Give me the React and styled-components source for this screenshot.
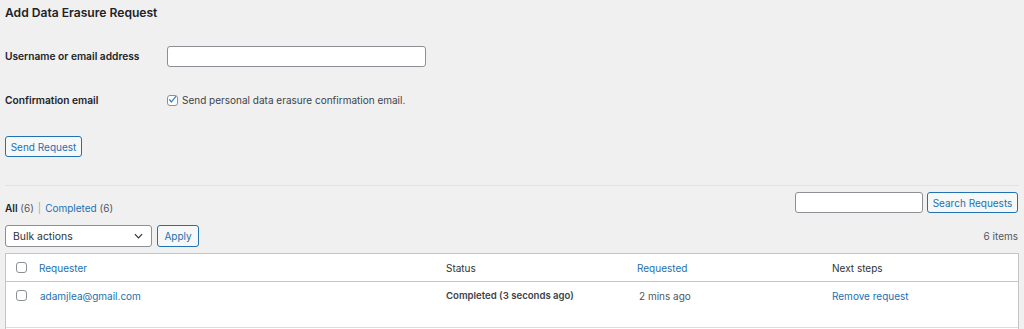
import React from 'react';
import styled, { createGlobalStyle } from 'styled-components';

const GlobalStyle = createGlobalStyle`
    body {
        margin: 0;
        background: #f0f0f1;
        font-family: Inter, "Liberation Sans", sans-serif;
        font-size: 10px;
        color: #3c434a;
    }
`;

const Page = styled.div`
    padding: 0 5px;
    overflow: hidden;
    height: 329px;
`;

const Title = styled.h2`
    margin: 0;
    padding-top: 5px;
    height: 29px;
    font-size: 12.1px;
    line-height: 16px;
    font-weight: 600;
    color: #1d2327;
`;

const FormRow = styled.div`
    display: flex;
    align-items: center;
    height: 44px;
`;

const Label = styled.div`
    width: 162px;
    font-size: 10.2px;
    font-weight: 600;
    color: #1d2327;
`;

const TextInput = styled.input`
    box-sizing: border-box;
    width: ${({w}) => w}px;
    height: 21px;
    margin: 0;
    border: 1px solid #8c8f94;
    border-radius: 3px;
    background: #fff;
`;

const CheckLabel = styled.label`
    display: flex;
    align-items: center;
    gap: 4px;
    color: #3c434a;
`;

const Box = styled.span`
    box-sizing: border-box;
    display: inline-flex;
    align-items: center;
    justify-content: center;
    width: 11px;
    height: 11px;
    border: 1px solid #8c8f94;
    border-radius: 3px;
    background: #fff;
`;

const Button = styled.button`
    box-sizing: border-box;
    width: ${({w}) => w}px;
    height: ${({h}) => h || 21}px;
    padding: 0;
    border: 1px solid #2271b1;
    border-radius: 3px;
    background: #f6f7f7;
    color: #2271b1;
    font-family: inherit;
    font-size: 10px;
    cursor: pointer;
`;

const SubmitWrap = styled.div`
    margin-top: 14px;
`;

const Divider = styled.hr`
    margin: 28px 0 0;
    border: 0;
    border-top: 1px solid #e2e2e4;
`;

const TopBar = styled.div`
    display: flex;
    justify-content: space-between;
    margin-top: 6px;
    height: 21px;
`;

const Filters = styled.div`
    margin-top: 9px;
    line-height: 14px;
    color: #50575e;

    b { color: #1d2327; font-weight: 600; }
    a { color: #2271b1; text-decoration: none; }
    .sep { color: #a7aaad; margin: 0 4px; }
`;

const SearchBox = styled.div`
    display: flex;
    gap: 4px;
    padding-right: 1px;
`;

const NavBar = styled.div`
    display: flex;
    align-items: center;
    justify-content: space-between;
    margin-top: 12px;
    height: 22px;
`;

const NavLeft = styled.div`
    display: flex;
    gap: 5px;
`;

const Select = styled.div`
    box-sizing: border-box;
    display: flex;
    align-items: center;
    justify-content: space-between;
    width: 147px;
    height: 22px;
    padding: 0 8px 0 7px;
    border: 1px solid #8c8f94;
    border-radius: 3px;
    background: #fff;
    color: #2c3338;
    font-size: 10.4px;
`;

const Count = styled.div`
    color: #50575e;
    padding-right: 1px;
`;

const Table = styled.div`
    margin-top: 6px;
    border: 1px solid #c3c4c7;
    background: #fff;
`;

const Row = styled.div`
    display: grid;
    grid-template-columns: 28px 407px 191px 195px 1fr;
    height: ${({h}) => h}px;
    align-items: ${({head}) => (head ? 'center' : 'start')};
    border-bottom: 1px solid ${({head}) => (head ? '#c3c4c7' : '#dcdcde')};
    color: ${({head}) => (head ? '#2c3338' : '#50575e')};
`;

const Cell = styled.div`
    padding: ${({head}) => (head ? '0' : '7px')} 0 0 ${({pl}) => pl ?? 5}px;
    line-height: 14px;
    font-size: ${({bold}) => (bold ? '9.6px' : 'inherit')};
    font-weight: ${({bold}) => (bold ? 600 : 400)};
    color: ${({link, bold}) => (link ? '#2271b1' : bold ? '#3c434a' : 'inherit')};
`;

const CheckCell = styled.div`
    display: flex;
    padding: ${({head}) => (head ? '0' : '8px')} 0 0 10px;
`;

const Checkmark = () => (
    <svg width="11" height="11" viewBox="0 0 20 20" style={{ marginTop: -1 }}>
        <path d="M3.5 10.5l4.2 5L17 3.5" fill="none" stroke="#3582c4" strokeWidth="2.8" strokeLinecap="round" strokeLinejoin="round" />
    </svg>
);

const Chevron = () => (
    <svg width="9" height="6" viewBox="0 0 10 6">
        <path d="M1 1l4 4 4-4" fill="none" stroke="#2c3338" strokeWidth="1.3" />
    </svg>
);

export default function App() {
    return (
        <Page>
            <GlobalStyle />
            <Title>Add Data Erasure Request</Title>
            <FormRow>
                <Label>Username or email address</Label>
                <TextInput w={259} />
            </FormRow>
            <FormRow>
                <Label>Confirmation email</Label>
                <CheckLabel>
                    <Box><Checkmark /></Box>
                    Send personal data erasure confirmation email.
                </CheckLabel>
            </FormRow>
            <SubmitWrap>
                <Button w={77}>Send Request</Button>
            </SubmitWrap>
            <Divider />
            <TopBar>
                <Filters>
                    <b>All</b> (6)<span className="sep">|</span><a href="#">Completed</a> (6)
                </Filters>
                <SearchBox>
                    <TextInput w={128} />
                    <Button w={91}>Search Requests</Button>
                </SearchBox>
            </TopBar>
            <NavBar>
                <NavLeft>
                    <Select>Bulk actions <Chevron /></Select>
                    <Button h={22} w={42}>Apply</Button>
                </NavLeft>
                <Count>6 items</Count>
            </NavBar>
            <Table>
                <Row head h={27}>
                    <CheckCell head><Box /></CheckCell>
                    <Cell head link>Requester</Cell>
                    <Cell head>Status</Cell>
                    <Cell head link>Requested</Cell>
                    <Cell head>Next steps</Cell>
                </Row>
                <Row h={45}>
                    <CheckCell><Box /></CheckCell>
                    <Cell link pl={6}>adamjlea@gmail.com</Cell>
                    <Cell bold>Completed (3 seconds ago)</Cell>
                    <Cell pl={7}>2 mins ago</Cell>
                    <Cell link>Remove request</Cell>
                </Row>
                <Row h={45} />
            </Table>
        </Page>
    );
}
